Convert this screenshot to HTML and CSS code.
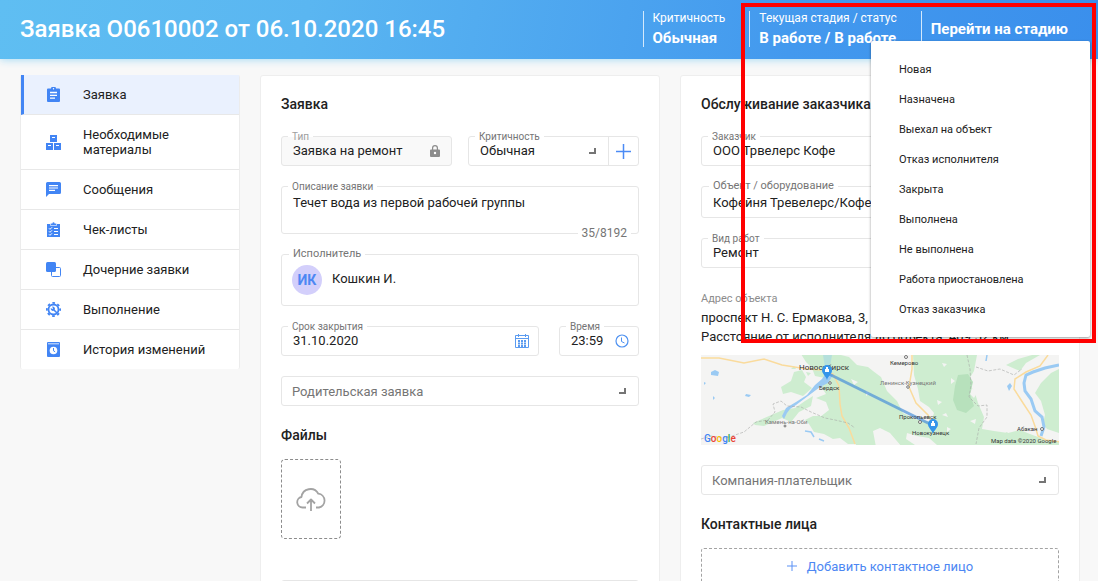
FILE: index.html
```html
<!DOCTYPE html>
<html lang="ru">
<head>
<meta charset="utf-8">
<title>Заявка О0610002</title>
<link rel="stylesheet" href="styles.css">
</head>
<body>
<div class="page">
  <header class="topbar">
    <h1 class="topbar-title">Заявка О0610002 от 06.10.2020 16:45</h1>
    <div class="stat"><span class="stat-name">Критичность</span><strong class="stat-value">Обычная</strong></div>
    <div class="stat"><span class="stat-name">Текущая стадия / статус</span><strong class="stat-value">В работе / В работе</strong></div>
    <div class="stat stat-action"><button class="stage-button" type="button">Перейти на стадию</button></div>
  </header>

  <div class="layout">
    <nav class="sidebar">
      <a class="nav-item nav-item-active" href="#order">
        <svg class="nav-icon" viewBox="0 0 15 15"><path fill="#4285f4" d="M2 1.500h3a2.500 2 0 0 1 5 0h3a1 1 0 0 1 1 1v11.500a1 1 0 0 1-1 1h-11a1 1 0 0 1-1-1v-11.500a1 1 0 0 1 1-1z"/><circle cx="7.500" cy="1.700" r=".7" fill="#fff"/><path stroke="#fff" stroke-width="1.300" d="M4 5.500h7M4 8.300h7M4 11.100h5"/></svg>
        <span>Заявка</span></a>
      <a class="nav-item" href="#materials">
        <svg class="nav-icon" viewBox="0 0 15 15"><path fill="#4285f4" d="M4 0h7v7h-7zM0 8h7v7h-7zM8 8h7v7h-7z"/><path stroke="#fff" stroke-width="1" d="M6 2.500h3M2 10.500h3M10 10.500h3"/></svg>
        <span>Необходимые материалы</span></a>
      <a class="nav-item" href="#messages">
        <svg class="nav-icon" viewBox="0 0 15 15"><path fill="#4285f4" d="M1.500 0h12a1.500 1.500 0 0 1 1.500 1.500v9a1.500 1.500 0 0 1-1.500 1.500h-10.500l-3 3v-13.500a1.500 1.500 0 0 1 1.500-1.500z"/><path stroke="#fff" stroke-width="1.200" d="M3 3.700h9M3 6h9M3 8.300h6"/></svg>
        <span>Сообщения</span></a>
      <a class="nav-item" href="#checklists">
        <svg class="nav-icon" viewBox="0 0 15 15"><path fill="#4285f4" d="M1 2h13v13h-13z"/><path fill="#4285f4" stroke="#fff" stroke-width=".6" d="M4.500 1.200h1.800a1.200 1.200 0 0 1 2.400 0h1.800v2.300h-6z"/><path fill="none" stroke="#fff" stroke-width="1" d="M3 6.300l1 1 2-2M8 6.500h4M3 9.300l1 1 2-2M8 9.500h4M3 12.300l1 1 2-2M8 12.500h4"/></svg>
        <span>Чек-листы</span></a>
      <a class="nav-item" href="#children">
        <svg class="nav-icon" viewBox="0 0 15 15"><rect x="5.500" y="5.500" width="9" height="9" rx="1" fill="#fff" stroke="#4285f4"/><rect width="10" height="10" rx="1.500" fill="#4285f4"/></svg>
        <span>Дочерние заявки</span></a>
      <a class="nav-item" href="#progress">
        <svg class="nav-icon" viewBox="0 0 15 15"><circle cx="7.500" cy="7.500" r="5" fill="none" stroke="#4285f4" stroke-width="1.800"/><circle cx="7.500" cy="7.500" r="6.600" fill="none" stroke="#4285f4" stroke-width="1.800" stroke-dasharray="2.600 2.584" stroke-dashoffset="1.300"/><path fill="none" stroke="#4285f4" stroke-width="1.600" d="M8 8l3 3"/><path fill="#4285f4" d="M4.800 6l1.500 1 .8-.8-1.100-1.500a2.300 2.300 0 0 1 2.800 3l-1.100 1.100a2.300 2.300 0 0 1-2.900-2.800z"/></svg>
        <span>Выполнение</span></a>
      <a class="nav-item" href="#history">
        <svg class="nav-icon" viewBox="0 0 15 15"><path fill="#4285f4" d="M2 0h11a1 1 0 0 1 1 1v13a1 1 0 0 1-1 1h-11a1 1 0 0 1-1-1v-13a1 1 0 0 1 1-1z"/><path stroke="#fff" stroke-width=".8" d="M2 1.800h11"/><circle cx="7.500" cy="8.500" r="3.800" fill="#fff"/><path fill="none" stroke="#4285f4" stroke-width="1" d="M7.500 6v2.800l1.600 1"/></svg>
        <span>История изменений</span></a>
    </nav>

    <main class="card">
      <h2 class="card-title">Заявка</h2>
      <div class="row row-halves">
        <div class="field field-locked">
          <label class="field-label" for="type">Тип</label>
          <input class="control" id="type" value="Заявка на ремонт" readonly>
          <svg class="lock-icon" viewBox="0 0 10 12"><path fill="#8c8c8c" d="M1 4.500h1v-1.500a3 3 0 0 1 6 0v1.500h1a1 1 0 0 1 1 1v5.500a1 1 0 0 1-1 1h-8a1 1 0 0 1-1-1v-5.500a1 1 0 0 1 1-1zm2.200 0h3.600v-1.500a1.800 1.800 0 0 0-3.600 0z"/><circle cx="5" cy="8" r="1.200" fill="#fff"/></svg>
        </div>
        <div class="field">
          <label class="field-label" for="priority">Критичность</label>
          <select class="control" id="priority"><option>Обычная</option></select>
          <span class="corner"></span>
          <button class="add-button" type="button" aria-label="Добавить"><svg class="add-icon" viewBox="0 0 15 15"><path stroke="#4b8bf5" stroke-width="1.500" d="M7.500 0v15M0 7.500h15"/></svg></button>
        </div>
      </div>
      <div class="field field-text">
        <label class="field-label" for="description">Описание заявки</label>
        <textarea class="control" id="description">Течет вода из первой рабочей группы</textarea>
        <span class="counter">35/8192</span>
      </div>
      <div class="field field-person">
        <span class="field-label field-label-large">Исполнитель</span>
        <span class="avatar">ИК</span>
        <span class="person-name">Кошкин И.</span>
      </div>
      <div class="row row-date">
        <div class="field">
          <label class="field-label" for="date">Срок закрытия</label>
          <input class="control" id="date" value="31.10.2020">
          <svg class="date-icon" viewBox="0 0 14 14"><path fill="none" stroke="#5b9bf0" d="M.5 1.500h13v12h-13zM.5 4.500h13M3.500 0v3M10.500 0v3"/><path stroke="#5b9bf0" stroke-width="2" stroke-dasharray="2 1" d="M3 7h8M3 9.500h8M3 12h8"/></svg>
        </div>
        <div class="field">
          <label class="field-label" for="time">Время</label>
          <input class="control" id="time" value="23:59">
          <svg class="time-icon" viewBox="0 0 14 14"><circle cx="7" cy="7" r="6" fill="none" stroke="#4f92f1" stroke-width="1.200"/><path fill="none" stroke="#4f92f1" d="M6.500 3.500v4l3 1.500"/></svg>
        </div>
      </div>
      <div class="field">
        <select class="control control-empty" aria-label="Родительская заявка"><option>Родительская заявка</option></select>
        <span class="corner"></span>
      </div>
      <h2 class="card-title section-title">Файлы</h2>
      <button class="upload" type="button" aria-label="Загрузить файл"><svg class="upload-icon" viewBox="0 0 30 24"><path fill="none" stroke="#a3a3a3" stroke-width="1.800" stroke-linejoin="round" d="M10 20.500h-3.500a5.300 5.300 0 0 1-1-10.500a9 9 0 0 1 16.800-3.300a7 7 0 0 1 .7 13.800h-3M15 24v-11M11 16.500l4-4 4 4"/></svg></button>
      <div class="field field-next"></div>
    </main>

    <section class="card">
      <h2 class="card-title">Обслуживание заказчика</h2>
      <div class="field">
        <label class="field-label" for="customer">Заказчик</label>
        <input class="control" id="customer" value="ООО Трвелерс Кофе">
      </div>
      <div class="field field-tall">
        <label class="field-label field-label-large" for="object">Объект / оборудование</label>
        <input class="control" id="object" value="Кофейня Тревелерс/Кофемашина">
      </div>
      <div class="field">
        <label class="field-label" for="work">Вид работ</label>
        <input class="control" id="work" value="Ремонт">
      </div>
      <div class="address">
        <span class="address-label">Адрес объекта</span>
        <span>проспект Н. С. Ермакова, 3,</span>
        <span>Расстояние от исполнителя до объекта: 409.52 км.</span>
      </div>
      <svg class="map" viewBox="0 0 358 90" preserveAspectRatio="xMidYMid slice">
        <rect width="358" height="90" fill="#f4f4f3"/>
        <g fill="#ceedd0">
          <path d="M123 0h17l8 2 8 8 11 2 5 4 8 6 6 14 10 10 6 12 12 6 16 3 3-9-5-6-9-6-2-12-4-14-1-20h64l-3 16-6 10 7 12 3 10 6 14-2 12 12 2 14 2 12-3 10 4 16 6 16 2v5h-160l-12-14-10-5-7 3 3 16h-18l-6-7-10-4-8-10-10-3-4-6 9-7-3-8-10-4 10-4-4-6 3-10-10-2-3-8-6-6-5-8-5-1z"/>
          <path d="M358 14v64l-12-4-4-6 2-8-4-14-6-8 6-10 10-10z"/>
          <path d="M52 68l30-13 12-2 10-7 8-5-2 10-12 6-8 10-9-4-18 8-9-1z"/>
          <path d="M80 32l10-6 3-9 8-2 4 7-2 5 8 6-9 8-12-4-8 2zM90 14l3-3 2 3zM105 17l5 1-3 3z"/>
          <path d="M104 65l8-4 12 0 8 4 8 0 5 7 7 5 7 12h-12l-8-6-7 1-9-5-10-2-5-8z"/>
          <path d="M305 10l12-6 14-4h8l-14 8-6 8zM298 82l8-5 6 7-8 6z"/>
        </g>
        <g fill="#f4f4f3">
          <path d="M150 24l7 3-4 3zM165 36l4 2-4 3zM241 8l5 1-3 3zM250 23l4 3-4 3zM236 45l5 2-4 3zM241 60l4-2 2 4zM262 40l5 3-3 4zM269 66l6-2-1 5zM246 72l4 2-4 3zM271 33l5 5-3 5-4-4z"/>
          <path d="M206 78l10 3 12 2 8 7h-22l-9-6z"/>
        </g>
        <path fill="#b7e1bc" d="M257 20l10-1 5 8-3 12 4 12-8 7-9-3-4-10 2-14z"/>
        <g fill="#9acaf3">
          <path d="M10 17l4-2 4 2-1 4-7-1zM45 39l5 1-2 2-4-1zM12 41l2 2-2 2zM306 31l3-3 2 3-3 5zM3 27l2 1-2 2z"/>
          <path d="M130 15l2 5-5 8-8 4-12 9-12 9-6 4-3 4-3 6-2-3 4-8 10-6 11-7 8-10 7-6 4-6z"/>
        </g>
        <path fill="#b5e0dc" d="M122 0h9l-2 12h-5z"/>
        <g fill="none" stroke="#9acaf3">
          <path stroke-width="3" d="M358 10l-14 3-12 4-7 3-2 8 1 8 6 8 4 12 7 6 2 10-3 9"/>
          <path stroke-width="1.500" d="M104 76l6 1 3 5M118 84l5 2M286 0l-1 6"/>
        </g>
        <g fill="none" stroke="#fadb9c" stroke-width="1.500">
          <path d="M0 3l18 0 25 5 20-4 18 6 25 4 16 1 10 4 6 12 1 18 2 12 7 12 6 16M211 0v14l-3 18 7 16 12 12 4 8M347 0l-8 11-14 6-11 7-1 10 9 14 8 12 5 14 2 7 8 4 14 2"/>
        </g>
        <g fill="none" stroke="#a6a7a6" stroke-width=".6" stroke-dasharray="3 1.500">
          <path d="M0 84l10-3 15 2 18-6 12-10 12-2 7-8-2-8 8-3 6 5 14 1 10 5 14 6 10 2 13 3 7 5M266 0l3 14 1 16-2 12 9 9 9-1 0 12-8 11-3 16M275 12l12 4 12-2 14 6 8-6"/>
        </g>
        <path stroke="#4a90d8" stroke-opacity=".7" stroke-width="3" d="M128 19l103 51"/>
        <g fill="#fff" stroke="#555" stroke-width=".8"><circle cx="129" cy="28" r="1.300"/><circle cx="84" cy="71" r="1"/><circle cx="205" cy="2" r="1.500"/><circle cx="207" cy="32" r="1.300"/><circle cx="219" cy="67" r="1.500"/><circle cx="341" cy="74" r="1.500"/></g>
        <g class="map-city">
          <text class="map-city-big" x="98" y="15">Новосибирск</text>
          <text x="118" y="35">Бердск</text>
          <text class="map-town" x="64" y="69">Камень-на-Оби</text>
          <text x="189" y="10">Кемерово</text>
          <text class="map-town" x="179" y="30">Ленинск-Кузнецкий</text>
          <text x="198" y="64">Прокопьевск</text>
          <text x="211" y="80">Новокузнецк</text>
          <text x="316" y="76">Абакан</text>
          <text x="290" y="88">Map data ©2020 Google</text>
        </g>
        <g fill="#3595ea">
          <path d="M126 25c-1-4-5-6-5-10a5 5 0 0 1 10 0c0 4-4 6-5 10zM232 79c-1-4-5-6-5-10a5 5 0 0 1 10 0c0 4-4 6-5 10z"/>
          <path fill="#fff" d="M125 12h2v2h1v3h-4v-3h1zM231 66h2v2h1v3h-4v-3h1z"/>
        </g>
        <text class="map-logo" x="3" y="87"><tspan fill="#4285f4">G</tspan><tspan fill="#ea4335">o</tspan><tspan fill="#fbbc05">o</tspan><tspan fill="#4285f4">g</tspan><tspan fill="#34a853">l</tspan><tspan fill="#ea4335">e</tspan></text>
      </svg>
      <div class="field">
        <select class="control control-empty" aria-label="Компания-плательщик"><option>Компания-плательщик</option></select>
        <span class="corner"></span>
      </div>
      <h2 class="card-title section-title">Контактные лица</h2>
      <button class="add-contact" type="button"><svg class="contact-icon" viewBox="0 0 10 10"><path stroke="#5b91f5" d="M5 0v10M0 5h10"/></svg>Добавить контактное лицо</button>
    </section>
  </div>

  <div class="stage-menu">
    <button class="stage-item" type="button">Новая</button>
    <button class="stage-item" type="button">Назначена</button>
    <button class="stage-item" type="button">Выехал на объект</button>
    <button class="stage-item" type="button">Отказ исполнителя</button>
    <button class="stage-item" type="button">Закрыта</button>
    <button class="stage-item" type="button">Выполнена</button>
    <button class="stage-item" type="button">Не выполнена</button>
    <button class="stage-item" type="button">Работа приостановлена</button>
    <button class="stage-item" type="button">Отказ заказчика</button>
  </div>
  <div class="highlight"></div>
</div>
</body>
</html>
```
FILE: styles.css
```css
* { box-sizing: border-box; }
body {
  margin: 0;
  background: #f8f8f8;
  color: #212121;
  font: 13px/15px Roboto, "Liberation Sans", sans-serif;
}
button, input, select, textarea { font: inherit; color: inherit; }
button { border: 0; padding: 0; background: none; cursor: pointer; }
.page { position: relative; height: 100vh; overflow: hidden; }

.topbar {
  display: flex;
  align-items: center;
  height: 59px;
  padding: 0 30px 2px 20px;
  background: linear-gradient(100deg, #5fbef2, #5ab6f1 28%, #4399ee 72%, #3a8fec);
  box-shadow: 0 1px 8px #a8dcf5;
  color: #fff;
}
.topbar-title { flex: 1; margin: 0; font-size: 24px; line-height: 28px; font-weight: 500; }
.stat {
  display: flex;
  flex-direction: column;
  justify-content: space-between;
  height: 36px;
  padding: 0 24px 0 9px;
  border-left: 1px solid #d4e9fc;
}
.stat-name { font-size: 12px; line-height: 14px; }
.stat-value { font-size: 15px; line-height: 18px; font-weight: 700; }
.stat-action { justify-content: center; padding-right: 0; }
.stage-button { font-size: 15px; line-height: 18px; font-weight: 700; }

.layout {
  display: grid;
  grid-template-columns: 220px minmax(0, 1fr) minmax(0, 1fr);
  gap: 20px;
  align-items: start;
  padding: 16px 18px 0 20px;
}
.sidebar { background: #fff; border: solid #ececec; border-width: 0 1px; border-radius: 2px; }
.nav-item {
  display: flex;
  align-items: center;
  gap: 22px;
  padding: 12px 30px 12px 25px;
  border-bottom: 1px solid #e8e8e8;
  color: inherit;
  text-decoration: none;
}
.nav-item:last-child { border-bottom: 0; }
.nav-item-active { padding-left: 22px; border-left: 3px solid #4285f4; background: #eaf1fe; }
.nav-icon { flex: none; width: 15px; height: 15px; }

.card {
  min-height: 560px;
  padding: 18px 20px;
  background: #fff;
  border: 1px solid #eee;
  border-radius: 3px;
}
.card-title { margin: 0 0 22px; font-size: 14px; line-height: 20px; font-weight: 500; }
.section-title { margin: -1px 0 14px; }
.row { display: grid; margin-bottom: 20px; }
.row-halves { grid-template-columns: repeat(2, minmax(0, 1fr)); gap: 16px; }
.row-date { grid-template-columns: 1fr 80px; gap: 20px; }
.row .field { margin-bottom: 0; }
.field {
  position: relative;
  display: flex;
  align-items: center;
  height: 30px;
  margin-bottom: 20px;
  border: 1px solid #e6e6e6;
  border-radius: 3px;
}
.field-label {
  position: absolute;
  top: -6px;
  left: 6px;
  padding: 0 4px;
  background: #fff;
  color: #757575;
  font-size: 10px;
  line-height: 12px;
}
.field-label-large { top: -7px; left: 7px; font-size: 11px; }
.control {
  flex: 1;
  min-width: 0;
  height: 28px;
  padding: 0 11px 2px;
  border: 0;
  outline: 0;
  background: none;
  appearance: none;
  resize: none;
}
.control-empty { padding: 0 10px; color: #757575; }
.field-locked { background: #f9f9f9; }
.field-locked .field-label { background: linear-gradient(#fff 50%, #f9f9f9 50%); color: #9e9e9e; }
.lock-icon { width: 10px; height: 12px; margin-right: 11px; }
.corner { width: 7px; height: 6px; margin-right: 12px; border: solid #757575; border-width: 0 2px 2px 0; }
.add-button { width: 30px; height: 28px; border-left: 1px solid #e6e6e6; }
.add-icon { display: block; width: 15px; height: 15px; margin: auto; }
.field-text { height: 48px; }
.field-text .control { height: 46px; padding-top: 8px; overflow: hidden; }
.counter {
  position: absolute;
  right: 7px;
  bottom: -7px;
  padding: 0 4px;
  background: #fff;
  color: #757575;
  font-size: 12px;
  line-height: 14px;
}
.field-person { height: 52px; gap: 10px; padding-left: 10px; }
.person-name { padding-bottom: 4px; }
.avatar {
  width: 30px;
  height: 30px;
  border-radius: 50%;
  background: #d3cffb;
  color: #4d87f3;
  font-size: 14px;
  line-height: 30px;
  font-weight: 700;
  text-align: center;
}
.date-icon { width: 14px; height: 14px; margin-right: 9px; }
.time-icon { flex: none; width: 14px; height: 14px; margin-right: 9px; }
.row-date .control { padding-right: 0; }
.upload {
  display: grid;
  place-items: center;
  width: 60px;
  height: 80px;
  margin-bottom: 41px;
  border: 1px dashed #8c8c8c;
  border-radius: 4px;
}
.upload-icon { width: 30px; height: 24px; }
.field-tall { height: 32px; }
.field-tall .control { padding-bottom: 0; }
.address { display: flex; flex-direction: column; margin: 21px 0 9px; line-height: 19px; white-space: nowrap; }
.address-label { color: #8c8c8c; font-size: 11px; }
.map { display: block; width: 100%; height: 90px; margin-bottom: 20px; }
.map-city { fill: #333; font-size: 6px; }
.map-city-big { font-size: 8px; }
.map-town { fill: #777; }
.map-logo { font-size: 10px; font-weight: 500; }
.add-contact {
  display: flex;
  align-items: center;
  justify-content: center;
  gap: 10px;
  width: 100%;
  height: 36px;
  border: 1px dashed #a3a3a3;
  border-radius: 3px;
  color: #4d87f3;
}
.contact-icon { width: 10px; height: 10px; }

.stage-menu {
  position: absolute;
  top: 41px;
  right: 8px;
  display: flex;
  flex-direction: column;
  width: 219px;
  padding: 14px 0 12px;
  background: #fff;
  border-radius: 2px;
  box-shadow: 0 1px 3px #00000066;
}
.stage-item { padding: 0 28px; font-size: 11px; line-height: 30px; text-align: left; }
.highlight {
  position: absolute;
  top: 3px;
  right: 2px;
  width: 355px;
  height: 340px;
  border: 4px solid #f00;
  pointer-events: none;
}
```
